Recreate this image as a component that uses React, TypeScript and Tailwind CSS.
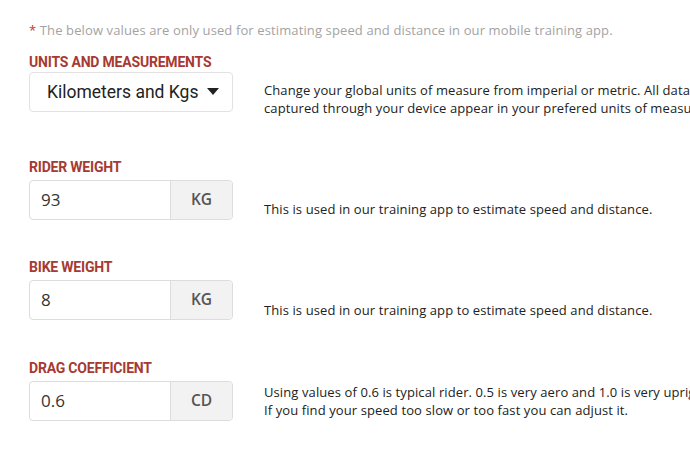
import React from "react";

const Label = ({ children, mt }: { children: React.ReactNode; mt: string }) => (
  <div className={`${mt} text-[14px] leading-[16px] font-bold tracking-[-0.2px] text-[#a63a32] font-['Roboto',sans-serif]`}>{children}</div>
);

function InputRow({ value, unit, desc, pt }: { value: string; unit: string; desc: React.ReactNode; pt: string }) {
  return (
    <div className="mt-[5px] flex">
      <div className="flex h-[40px] w-[204px] shrink-0 rounded-[4px] border border-[#dcdcdc]">
        <div className="flex w-[140px] items-center pl-[11px] text-[17px] text-[#333]">{value}</div>
        <div className="flex flex-1 items-center justify-center rounded-r-[4px] border-l border-[#dcdcdc] bg-[#f2f2f2] text-[15.5px] font-semibold text-[#555]">
          {unit}
        </div>
      </div>
      <div className={`ml-[31px] ${pt} whitespace-nowrap text-[13px] tracking-[0.1px] leading-[18px] text-[#222]`}>{desc}</div>
    </div>
  );
}

export default function App() {
  return (
    <div className="h-[476px] w-[690px] overflow-hidden bg-white pl-[29px] font-['Open_Sans',sans-serif]">
      <div className="pt-[22px] text-[13px] tracking-[0.12px] leading-[16px] text-[#a3a3a3] whitespace-nowrap">
        <span className="text-[#c0392b]">*</span> The below values are only used for estimating speed and distance in our mobile training app.
      </div>

      <Label mt="mt-[16px]">UNITS AND MEASUREMENTS</Label>
      <div className="mt-[2px] flex">
        <div className="flex h-[40px] w-[204px] shrink-0 items-center justify-between rounded-[4px] border border-[#e2e2e2] pl-[17px] pr-[13px] font-['Roboto',sans-serif] text-[17.5px] text-[#222]">
          <span>Kilometers and Kgs</span>
          <svg width="12" height="8" viewBox="0 0 12 8">
            <path d="M0 0 L12 0 L6 7 Z" fill="#222" />
          </svg>
        </div>
        <div className="ml-[31px] pt-[9px] whitespace-nowrap text-[13px] tracking-[0.1px] leading-[18px] text-[#222]">
          <div>Change your global units of measure from imperial or metric. All data</div>
          <div>captured through your device appear in your prefered units of measure.</div>
        </div>
      </div>

      <Label mt="mt-[42px]">RIDER WEIGHT</Label>
      <InputRow value="93" unit="KG" pt="pt-[20px]" desc="This is used in our training app to estimate speed and distance." />

      <Label mt="mt-[39px]">BIKE WEIGHT</Label>
      <InputRow value="8" unit="KG" pt="pt-[21px]" desc="This is used in our training app to estimate speed and distance." />

      <Label mt="mt-[40px]">DRAG COEFFICIENT</Label>
      <InputRow
        value="0.6"
        unit="CD"
        pt="pt-[2px]"
        desc={
          <>
            <div>Using values of 0.6 is typical rider. 0.5 is very aero and 1.0 is very upright.</div>
            <div>If you find your speed too slow or too fast you can adjust it.</div>
          </>
        }
      />
    </div>
  );
}
